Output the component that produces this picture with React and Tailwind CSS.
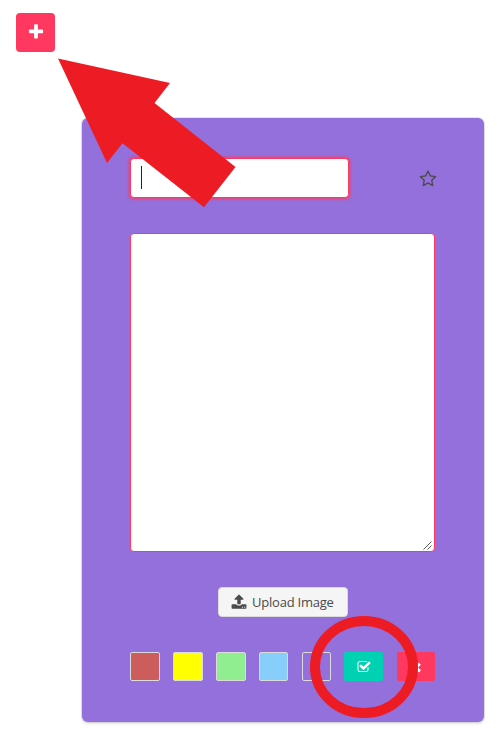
import React from 'react';

const paths = {
  plus: 'M1600 736v192q0 40-28 68t-68 28h-416v416q0 40-28 68t-68 28h-192q-40 0-68-28t-28-68v-416h-416q-40 0-68-28t-28-68v-192q0-40 28-68t68-28h416v-416q0-40 28-68t68-28h192q40 0 68 28t28 68v416h416q40 0 68 28t28 68z',
  upload: 'M1344 1472q0-26-19-45t-45-19-45 19-19 45 19 45 45 19 45-19 19-45zm256 0q0-26-19-45t-45-19-45 19-19 45 19 45 45 19 45-19 19-45zm128-224v320q0 40-28 68t-68 28h-1472q-40 0-68-28t-28-68v-320q0-40 28-68t68-28h427q21 56 70.5 92t110.5 36h256q61 0 110.5-36t70.5-92h427q40 0 68 28t28 68zm-325-648q-17 40-59 40h-256v448q0 26-19 45t-45 19h-256q-26 0-45-19t-19-45v-448h-256q-42 0-59-40-17-39 14-69l448-448q18-19 45-19t45 19l448 448q31 30 14 69z',
  check: 'M1472 930v318q0 119-84.5 203.5t-203.5 84.5h-832q-119 0-203.5-84.5t-84.5-203.5v-832q0-119 84.5-203.5t203.5-84.5h832q63 0 117 25 15 7 18 23 3 17-9 29l-49 49q-10 10-23 10-3 0-9-2-23-6-45-6h-832q-66 0-113 47t-47 113v832q0 66 47 113t113 47h832q66 0 113-47t47-113v-254q0-13 9-22l64-64q10-10 23-10 6 0 12 3 20 8 20 29zm231-489l-814 814q-24 24-57 24t-57-24l-430-430q-24-24-24-57t24-57l110-110q24-24 57-24t57 24l263 263 647-647q24-24 57-24t57 24l110 110q24 24 24 57t-24 57z',
  star: 'M1201 1004l306-297-422-62-189-382-189 382-422 62 306 297-73 421 378-199 377 199zm527-357q0 22-26 48l-363 354 86 500q1 7 1 20 0 50-41 50-19 0-40-12l-449-236-449 236q-22 12-40 12-21 0-31.5-14.5t-10.5-35.5q0-6 2-20l86-500-364-354q-25-27-25-48 0-37 56-46l502-73 225-455q19-41 49-41t49 41l225 455 502 73q56 9 56 46z',
  times: 'M1490 1322q0 40-28 68l-136 136q-28 28-68 28t-68-28l-294-294-294 294q-28 28-68 28t-68-28l-136-136q-28-28-28-68t28-68l294-294-294-294q-28-28-28-68t28-68l136-136q28-28 68-28t68 28l294 294 294-294q28-28 68-28t68 28l136 136q28 28 28 68t-28 68l-294 294 294 294q28 28 28 68z',
};

function Icon({ name, className }) {
  return (
    <svg viewBox="0 0 1792 1792" fill="currentColor" className={className} aria-hidden="true">
      <path d={paths[name]} />
    </svg>
  );
}

const swatches = [
  'mr-[13px] w-[30px] bg-[#cd5c5c]',
  'mr-[13px] w-[30px] bg-[#ffff00]',
  'mr-[13px] w-[30px] bg-[#90ee90]',
  'mr-[14px] w-[29px] bg-[#87cefa]',
  'mr-[13px] w-[29px] bg-transparent',
];

export default function App() {
  return (
    <main className="relative h-[737px] w-[504px] overflow-hidden bg-white pt-[13px] font-['Open_Sans','Noto_Sans',sans-serif] text-[#4a4a4a]">
      <button aria-label="Add note" className="ml-4 flex h-[39px] w-[39px] items-center justify-center rounded-[4px] bg-[#ff3860] pb-[2px] pl-px text-white">
        <Icon name="plus" className="h-[18px] w-[18px]" />
      </button>

      <section className="mt-[66px] ml-[82px] flex h-[604px] w-[402px] flex-col rounded-[6px] bg-[#9370db] pt-10 pr-[49px] pl-12 shadow-[0_2px_3px_rgba(10,10,10,0.1),0_0_0_1px_rgba(10,10,10,0.1)]">
        <div className="flex h-10 items-center justify-between">
          <div className="flex h-10 w-[219px] rounded-[4px] border border-[#ff3860] bg-white pt-[7px] pl-[10px] shadow-[0_0_3px_0.5px_#ff3860]">
            <span className="h-[23px] w-px bg-[#222]" />
          </div>
          <Icon name="star" className="-mr-[2px] mt-px h-[18px] w-[18px]" />
        </div>

        <div className="mt-[35px] flex h-[319px] w-[305px] items-end justify-end rounded-[4px] border border-[#ff3860] bg-white pr-[2px] pb-px">
          <svg viewBox="0 0 9 9" className="h-[9px] w-[9px]" stroke="#555" strokeWidth="1" aria-hidden="true">
            <path d="M0.5 8.5 8.5 0.5M4.5 8.5 8.5 4.5" />
          </svg>
        </div>

        <button className="mt-[35px] ml-[88px] flex h-[30px] w-[130px] items-center rounded-[4px] border border-[#dbdbdb] bg-[#f5f5f5] pl-3 text-[13px]">
          <Icon name="upload" className="mr-[5px] h-4 w-4 shrink-0" />
          <span className="pt-px tracking-[-0.22px] whitespace-nowrap">Upload Image</span>
        </button>

        <div className="mt-[35px] flex h-[29px]">
          {swatches.map((color) => (
            <span key={color} className={`h-[29px] shrink-0 rounded-[2px] border border-[#dbdbdb] ${color}`} />
          ))}
          <button aria-label="Save" className="mr-[14px] flex h-[29px] w-[39px] shrink-0 items-center justify-center rounded-[2px] bg-[#00d1b2] pl-px text-white">
            <Icon name="check" className="h-[14px] w-[14px]" />
          </button>
          <button aria-label="Close" className="flex h-[29px] w-[38px] shrink-0 items-center justify-center rounded-[2px] bg-[#ff3860] text-white">
            <Icon name="times" className="h-[14px] w-[14px]" />
          </button>
        </div>
      </section>

      <svg viewBox="0 0 504 737" className="pointer-events-none absolute inset-0 h-[737px] w-[504px]" aria-hidden="true">
        <polygon points="58,58.5 170,83 154.5,103 235.5,167 204,207.3 122.5,143.3 107,163" fill="#ed1c24" />
        <ellipse cx="364" cy="667" rx="49" ry="46" fill="none" stroke="#ed1c24" strokeWidth="10" />
      </svg>
    </main>
  );
}
